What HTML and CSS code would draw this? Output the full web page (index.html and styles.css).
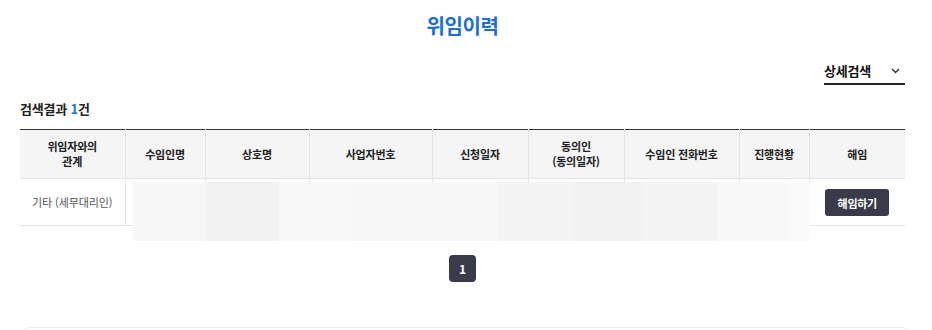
FILE: index.html
```html
<!DOCTYPE html>
<html lang="ko">
<head>
<meta charset="utf-8">
<title>위임이력</title>
<link rel="stylesheet" href="styles.css">
</head>
<body>
<div class="wrap">
  <h1 class="title">위임이력</h1>
  <div class="search-row">
    <button class="detail" type="button">
      <span>상세검색</span>
      <svg class="chev" width="9" height="6" viewBox="0 0 9 6"><path d="M1 1l3.5 3.5L8 1" fill="none" stroke="#333" stroke-width="1.4"/></svg>
    </button>
  </div>
  <p class="count">검색결과 <em>1</em>건</p>
  <div class="table-box">
    <table class="grid">
      <colgroup>
        <col class="c1"><col class="c2"><col class="c3"><col class="c4"><col class="c5"><col class="c6"><col class="c7"><col class="c8"><col class="c9">
      </colgroup>
      <thead>
        <tr>
          <th>위임자와의<br>관계</th>
          <th>수임인명</th>
          <th>상호명</th>
          <th>사업자번호</th>
          <th>신청일자</th>
          <th>동의인<br>(동의일자)</th>
          <th>수임인 전화번호</th>
          <th>진행현황</th>
          <th>해임</th>
        </tr>
      </thead>
      <tbody>
        <tr>
          <td class="rel">기타 (세무대리인)</td>
          <td></td><td></td><td></td><td></td><td></td><td></td><td></td>
          <td><button class="btn-dismiss" type="button">해임하기</button></td>
        </tr>
      </tbody>
    </table>
    <div class="mask">
      <span class="sh s1"></span><span class="sh s2"></span><span class="sh s3"></span><span class="sh s4"></span><span class="sh s5"></span><span class="sh s6"></span><span class="sh s7"></span><span class="sh s8"></span><span class="sh s9"></span><span class="sh s10"></span>
    </div>
  </div>
  <nav class="pager"><a class="page on">1</a></nav>
</div>
<div class="foot"></div>
</body>
</html>
```

FILE: styles.css
```css
* { box-sizing: border-box; }
html, body { margin: 0; padding: 0; background: #fff; }
body {
  font-family: "Noto Sans CJK KR", "Noto Sans", sans-serif;
  color: #222;
  overflow: hidden;
}
.wrap { margin: 0 27px 0 20px; }
.title {
  margin: 0;
  padding-top: 12px;
  font-size: 20px;
  line-height: 28px;
  font-weight: 700;
  color: #1b6fd8;
  text-align: center;
  letter-spacing: -0.4px;
}
.search-row {
  display: flex;
  justify-content: flex-end;
  margin-top: 20px;
}
.detail {
  width: 81px;
  height: 25px;
  padding: 0 5px 2px 0;
  border: 0;
  border-bottom: 2px solid #222;
  background: none;
  display: flex;
  justify-content: space-between;
  align-items: center;
  font-family: inherit;
  font-size: 13px;
  font-weight: 700;
  color: #111;
  letter-spacing: -0.2px;
}
.chev { margin-top: 1px; }
.count {
  margin: 14px 0 0;
  font-size: 13px;
  line-height: 20px;
  font-weight: 700;
  color: #222;
  letter-spacing: -0.2px;
}
.count em { font-style: normal; color: #1b6fd8; }
.table-box { position: relative; margin-top: 10px; }
.grid {
  width: 100%;
  border-collapse: collapse;
  table-layout: fixed;
  border-top: 1px solid #333;
}
.c1 { width: 105px; } .c2 { width: 80px; } .c3 { width: 104px; }
.c4 { width: 123px; } .c5 { width: 96px; } .c6 { width: 96px; }
.c7 { width: 115px; } .c8 { width: 70px; } .c9 { width: 96px; }
.grid th {
  height: 49px;
  padding: 0;
  background: #f5f5f5;
  font-size: 11px;
  line-height: 15px;
  font-weight: 700;
  color: #222;
  letter-spacing: -0.2px;
  border-left: 1px solid #e4e4e4;
  border-bottom: 1px solid #e4e4e4;
}
.grid td {
  height: 47px;
  padding: 0;
  text-align: center;
  font-size: 11px;
  color: #555;
  border-left: 1px solid #e4e4e4;
  border-bottom: 1px solid #e4e4e4;
}
.grid th:first-child, .grid td:first-child { border-left: 0; }
.rel { letter-spacing: -0.1px; }
.btn-dismiss {
  width: 64px;
  height: 27px;
  margin-top: 1px;
  border: 0;
  border-radius: 3px;
  background: #393b4b;
  color: #fff;
  font-family: inherit;
  font-size: 11px;
  font-weight: 700;
  letter-spacing: -0.3px;
}
.mask {
  position: absolute;
  left: 113px;
  top: 53px;
  width: 677px;
  height: 59px;
  display: flex;
  overflow: hidden;
}
.sh { flex: 0 0 73px; height: 100%; }
.s1 { background: #f7f7f7; }
.s2 { background: #f2f2f2; }
.s3 { background: #f8f8f8; }
.s4 { background: #f7f7f7; }
.s5 { background: #f7f7f7; }
.s6 { background: #f4f4f4; }
.s7 { background: #f2f2f2; }
.s8 { background: #f4f4f4; }
.s9 { background: #f8f8f8; }
.s10 { background: #fafafa; }
.pager {
  display: flex;
  justify-content: center;
  margin-top: 29px;
}
.page {
  width: 27px;
  height: 27px;
  display: flex;
  align-items: center;
  justify-content: center;
  border-radius: 4px;
  font-size: 12px;
  font-weight: 700;
  color: #fff;
}
.page.on { background: #393b4b; }
.foot {
  margin: 45px 24px 0 23px;
  height: 40px;
  border: 1px solid #ececec;
  border-radius: 6px;
}
```
